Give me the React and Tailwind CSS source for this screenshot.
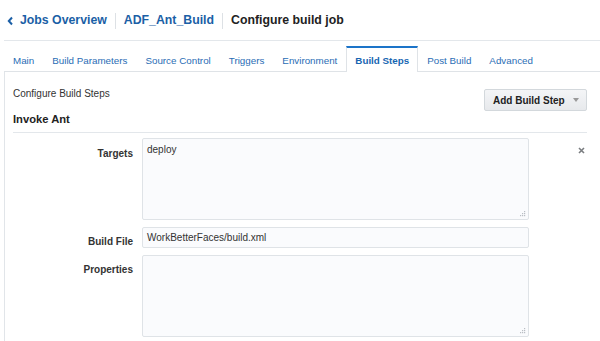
import React from 'react';

const tabs = ['Main', 'Build Parameters', 'Source Control', 'Triggers', 'Environment', 'Build Steps', 'Post Build', 'Advanced'];

const Grip = () => (
    <svg className="absolute bottom-[2px] right-[2px]" width="6" height="6" viewBox="0 0 6 6">
        {[[4, 0], [4, 2], [2, 2], [4, 4], [2, 4], [0, 4]].map(([x, y]) => (
            <rect key={`${x}-${y}`} x={x} y={y} width="1.2" height="1.2" fill="#b9bec4" />
        ))}
    </svg>
);

const Field = ({ label, tall, value, labelPad, extra }) => (
    <div className="flex items-start">
        <div className={`w-[120px] shrink-0 text-right text-[10px] font-bold leading-[12px] text-[#333] ${labelPad}`}>{label}</div>
        <div className={`relative ml-[9px] w-[387px] shrink-0 rounded-[2px] border border-[#dfe3e7] bg-[#fafbfd] px-[4px] text-[10px] text-[#333] ${tall ? 'h-[82px] pt-[5px] leading-[12px]' : 'h-[21px] leading-[19px]'}`}>
            {value}
            {tall ? <Grip /> : null}
        </div>
        {extra}
    </div>
);

export default function App() {
    return (
        <div className="h-[341px] w-[600px] overflow-hidden bg-white pl-[4px]" style={{ fontFamily: '"Liberation Sans", Arial, sans-serif' }}>
            <div className="flex h-[41px] items-center border-b border-[#e3e7eb] pl-[3px] pt-[1px] text-[12.3px] font-bold">
                <svg width="7" height="10" viewBox="0 0 7 10" className="mr-[6px]">
                    <path d="M5 1.5 L1.8 5 L5 8.5" fill="none" stroke="#1b5fa6" strokeWidth="2" />
                </svg>
                <span className="text-[#1b5fa6]">Jobs Overview</span>
                <span className="mx-[8px] h-[16px] w-px bg-[#dde1e5]" />
                <span className="text-[#1b5fa6]">ADF_Ant_Build</span>
                <span className="mx-[8px] h-[16px] w-px bg-[#dde1e5]" />
                <span className="text-[#222]">Configure build job</span>
            </div>

            <div className="mt-[5px] flex h-[26px] border-b border-[#dfe3e7]">
                {tabs.map((tab) => (
                    tab === 'Build Steps' ? (
                        <div key={tab} className="-mb-px flex items-center border-x border-t-2 border-x-[#dfe3e7] border-t-[#1c74c9] bg-white px-[8px] pt-[3px] text-[9.8px] font-bold text-[#1766b2]">{tab}</div>
                    ) : (
                        <div key={tab} className="flex items-center px-[9px] pt-[5px] text-[9.8px] text-[#2a6db5]">{tab}</div>
                    )
                ))}
            </div>

            <div className="border-l border-[#e1e5e9] pl-[8px] pr-[13px] pb-[20px]">
                <div className="flex items-start justify-between pt-[16px]">
                    <div className="text-[10px] leading-[12px] text-[#333]">Configure Build Steps</div>
                    <button className="mt-[1px] flex h-[22px] w-[103px] items-center rounded-[2px] border border-[#d3d8dc] bg-gradient-to-b from-[#f4f5f7] to-[#e7e9ec] pl-[8px] text-[10px] font-bold text-[#222]">
                        Add Build Step
                        <svg width="6" height="4" viewBox="0 0 6 4" className="ml-[8px]"><path d="M0 0 H6 L3 4 Z" fill="#999" /></svg>
                    </button>
                </div>
                <div className="mt-[1px] border-b border-[#e3e7eb] pb-[6px] text-[11.2px] font-bold leading-[14px] text-[#222]">Invoke Ant</div>

                <div className="mt-[5px] flex flex-col gap-[7px]">
                    <Field label="Targets" tall value="deploy" labelPad="pt-[10px]" extra={
                        <div className="flex flex-1 justify-end pr-[2px] pt-[9px]">
                            <svg width="7" height="7" viewBox="0 0 7 7"><path d="M1 1 L6 6 M6 1 L1 6" stroke="#7a7d80" strokeWidth="1.6" /></svg>
                        </div>
                    } />
                    <Field label="Build File" value="WorkBetterFaces/build.xml" labelPad="pt-[9px]" />
                    <Field label="Properties" tall value="" labelPad="pt-[9px]" />
                </div>
            </div>
        </div>
    );
}
